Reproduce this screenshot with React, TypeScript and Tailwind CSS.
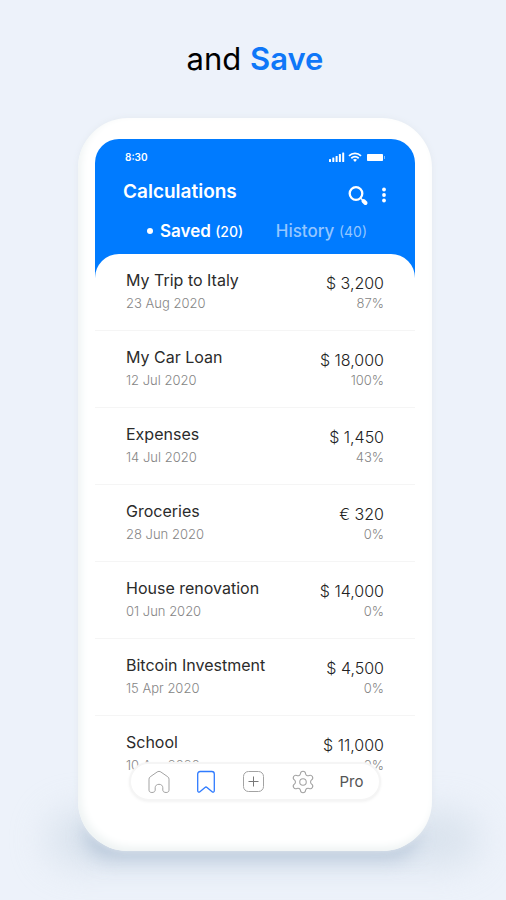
import { useState } from "react";
import { Settings } from "lucide-react";

const calculations = [
  { name: "My Trip to Italy", date: "23 Aug 2020", amount: "$ 3,200", percent: "87%" },
  { name: "My Car Loan", date: "12 Jul 2020", amount: "$ 18,000", percent: "100%" },
  { name: "Expenses", date: "14 Jul 2020", amount: "$ 1,450", percent: "43%" },
  { name: "Groceries", date: "28 Jun 2020", amount: "€ 320", percent: "0%" },
  { name: "House renovation", date: "01 Jun 2020", amount: "$ 14,000", percent: "0%" },
  { name: "Bitcoin Investment", date: "15 Apr 2020", amount: "$ 4,500", percent: "0%" },
  { name: "School", date: "10 Apr 2020", amount: "$ 11,000", percent: "0%" },
];

function StatusBar() {
  return (
    <div className="flex items-center justify-between px-[30px]">
      <span className="text-[10px] leading-4 font-semibold">8:30</span>
      <svg width="56" height="12" viewBox="0 0 56 12" fill="currentColor" aria-hidden="true">
        {/* Signal */}
        <rect x="0" y="8" width="2" height="3" rx="0.5" />
        <rect x="3.3" y="6.5" width="2" height="4.5" rx="0.5" />
        <rect x="6.6" y="5" width="2" height="6" rx="0.5" />
        <rect x="9.9" y="3" width="2" height="8" rx="0.5" />
        <rect x="13.2" y="1.5" width="2" height="9.5" rx="0.5" />
        {/* Wifi */}
        <path
          d="M20 4.8c3.4-3.2 8.6-3.2 12 0M22.3 7.2c2.2-1.9 5.2-1.9 7.4 0"
          fill="none"
          stroke="currentColor"
          strokeWidth="1.8"
        />
        <path d="M26 11l-2-2.2c1.2-1 2.8-1 4 0z" />
        {/* Battery */}
        <rect x="38" y="3" width="16" height="7" rx="0.8" />
        <rect x="55" y="5" width="1" height="3" opacity="0.5" />
      </svg>
    </div>
  );
}

function Header({ tab, onTab }: { tab: string; onTab: (tab: string) => void }) {
  return (
    <header className="rounded-t-[24px] bg-[#007bff] pt-[10px] text-white">
      <StatusBar />
      <div className="mt-3 flex items-center justify-between pl-7 pr-6">
        <h2 className="text-[19px] leading-7 font-semibold">Calculations</h2>
        <div className="flex items-center gap-2 pt-2">
          <button type="button" aria-label="Search">
            <svg width="22" height="22" viewBox="0 0 22 22" fill="none" stroke="currentColor">
              <circle cx="9" cy="8.5" r="6.3" strokeWidth="2.3" />
              <path d="M13.5 13l2 2" strokeWidth="1.5" />
              <path d="M16.5 16l2 2" strokeWidth="4" strokeLinecap="round" />
            </svg>
          </button>
          <button type="button" aria-label="More options">
            <svg width="14" height="22" viewBox="0 0 14 22" fill="currentColor">
              <circle cx="7" cy="4.5" r="1.9" />
              <circle cx="7" cy="10" r="1.9" />
              <circle cx="7" cy="15.5" r="1.9" />
            </svg>
          </button>
        </div>
      </div>
      <div className="mt-3 flex items-center justify-between pb-[11px] pl-[52px] pr-12">
        <button
          type="button"
          aria-pressed={tab === "saved"}
          onClick={() => onTab("saved")}
          className="flex items-center gap-[7px]"
        >
          <span className="size-[6px] rounded-full bg-white" />
          <span className="text-[17px] leading-6 font-semibold">
            Saved <span className="text-sm font-medium">(20)</span>
          </span>
        </button>
        <button
          type="button"
          aria-pressed={tab === "history"}
          onClick={() => onTab("history")}
          className="text-[17px] leading-6 font-medium text-[#94c6ff]"
        >
          History <span className="text-sm font-normal">(40)</span>
        </button>
      </div>
    </header>
  );
}

function BottomNav() {
  return (
    <nav className="relative mx-auto -mt-[31px] flex h-[39px] w-[79%] items-center justify-between rounded-full border-2 border-[#f5f5f5] bg-white px-4 text-[#a3a3a3] shadow-[0_1px_3px_#f3f3f3]">
      <button type="button" aria-label="Home">
        <svg width="24" height="24" viewBox="0 0 24 24" fill="none" stroke="currentColor">
          <path d="M2 9.2c0-1 .4-1.800 1.200-2.400l6.900-4.800c1.100-.8 2.700-.8 3.800 0l6.900 4.800c.8.600 1.200 1.400 1.200 2.400v11c0 1.500-1.200 2.300-2.900 2.300s-3.300-.8-3.300-2.300v-2.500c0-2-1.500-3.400-3.800-3.400s-3.800 1.400-3.800 3.400v2.500c0 1.500-1.600 2.300-3.300 2.300s-2.900-.8-2.900-2.300z" />
        </svg>
      </button>
      <button type="button" aria-label="Saved" className="text-[#2f7bff]">
        <svg width="24" height="24" viewBox="0 0 24 24" fill="none" stroke="currentColor" strokeWidth="1.3">
          <path d="M3.7 4c0-1.500.9-2.500 2.500-2.500h11.600c1.600 0 2.500 1 2.500 2.500v16.500c0 1.500-1 2.200-2.200 1.200L13 17.400c-.6-.5-1.400-.5-2 0l-5.100 4.300c-1.200 1-2.200.3-2.200-1.200z" />
        </svg>
      </button>
      <button type="button" aria-label="Add">
        <svg width="24" height="24" viewBox="0 0 24 24" fill="none" stroke="currentColor">
          <rect x="1.5" y="1.5" width="20" height="20" rx="5" />
          <path d="M11.5 6.5v10M6.5 11.5h10" stroke="#777" />
        </svg>
      </button>
      <button type="button" aria-label="Settings">
        <Settings className="size-[26px]" strokeWidth={1} />
      </button>
      <button type="button" className="text-[15px] leading-5 text-[#555]">
        Pro
      </button>
    </nav>
  );
}

export default function App() {
  const [tab, setTab] = useState("saved");

  return (
    <main className="min-h-screen overflow-hidden bg-[#edf2fa] pt-10 pb-12 pl-[78px] pr-[74px] font-['Inter',sans-serif]">
      <h1 className="text-center text-[31px] leading-[38px] text-black">
        and <span className="font-semibold text-[#0f77f8]">Save</span>
      </h1>

      <div className="relative mt-10">
        {/* Floor shadow */}
        <div className="absolute -right-12 -bottom-4 -left-8 h-14 rounded-full bg-[#cdd9e5] opacity-60 blur-[18px]" />
        <div className="absolute right-4 -bottom-2 left-2 h-12 rounded-full bg-[#a9bbd1] opacity-70 blur-[10px]" />

        <div className="relative rounded-[50px] bg-white px-[17px] pt-[21px] pb-[50px] shadow-[inset_3px_-4px_8px_#eef3f3,0_0_6px_#e3e9f0]">
          <Header tab={tab} onTab={setTab} />

          {/* The sheet rises over the blue header with rounded corners */}
          <div className="bg-linear-to-b from-[#007bff] from-[24px] to-white to-[24px]">
            <ul className="rounded-t-[24px] bg-white">
              {calculations.map((item) => (
                <li
                  key={item.name}
                  className="flex h-[77px] justify-between border-b border-[#f5f5f5] px-[31px] pt-4 last:border-0"
                >
                  <div>
                    <p className="text-base leading-5 text-[#2b2b2b]">{item.name}</p>
                    <p className="mt-1 text-[13px] leading-[18px] font-light text-[#858585]">{item.date}</p>
                  </div>
                  <div className="pt-[3px] text-right">
                    <p className="text-base leading-5 font-light text-[#222]">{item.amount}</p>
                    <p className="mt-px text-[13px] leading-[18px] font-light text-[#858585]">{item.percent}</p>
                  </div>
                </li>
              ))}
            </ul>
          </div>

          <BottomNav />
        </div>
      </div>
    </main>
  );
}
